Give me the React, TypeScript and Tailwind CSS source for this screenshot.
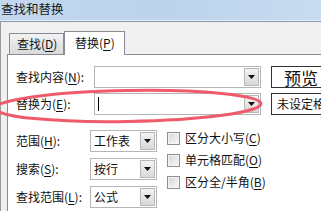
import type { ReactNode } from 'react';

function Arrow() {
  return (
    <svg width="7" height="4" viewBox="0 0 7 4">
      <path d="M0 0h7L3.5 4z" fill="#111" />
    </svg>
  );
}

function DropButton() {
  return (
    <div className="m-px flex w-[15px] shrink-0 items-center justify-center border border-[#b8b8b8] bg-linear-to-b from-[#f4f4f4] to-[#d8d8d8]">
      <Arrow />
    </div>
  );
}

function Key({ children }: { children: ReactNode }) {
  return <span className="underline underline-offset-2">{children}</span>;
}

function Combo({ width, children }: { width: string; children?: ReactNode }) {
  return (
    <div className={`flex h-[22px] shrink-0 border border-[#b5b5b5] bg-white ${width}`}>
      <div className="flex flex-1 items-center pl-[3px]">{children}</div>
      <DropButton />
    </div>
  );
}

function Check({ children }: { children: ReactNode }) {
  return (
    <div className="flex h-[22px] items-center gap-[5px] whitespace-nowrap">
      <div className="h-[13px] w-[13px] shrink-0 border border-[#8f8f8f] bg-linear-to-br from-[#d6d6d6] to-[#f9f9f9] shadow-[inset_0_0_0_1px_#f4f4f4]" />
      <span>{children}</span>
    </div>
  );
}

export default function App() {
  return (
    <div className="relative h-[211px] w-[321px] overflow-hidden bg-[#f0f0f0] font-['Noto_Sans_CJK_SC',sans-serif] text-[12px] leading-none text-[#111]">
      {/* title bar */}
      <div className="flex h-[21px] items-center border-b border-[#e2ebf5] bg-linear-to-r from-[#c2d8ef] via-[#bcd3eb] to-[#c7dcf1] pl-[1px] pb-[2px] text-[12.5px] text-[#1a1a1a]">
        查找和替换
      </div>
      <div className="h-px bg-[#8a9bb0]" />

      <div className="flex h-[189px] flex-col border-l border-[#9a9a9a] pl-[6px]">
        {/* tabs */}
        <div className="flex h-[32px] shrink-0 items-end pl-[2px]">
          <div className="flex h-[21px] w-[55px] items-center border border-b-0 border-[#898c95] bg-linear-to-b from-[#f3f3f3] to-[#dadada] pl-[7px]">
            查找(<Key>D</Key>)
          </div>
          <div className="relative z-10 -mb-px flex h-[24px] w-[61px] items-center border border-b-0 border-[#898c95] bg-white pb-[2px] pl-[10px]">
            替换(<Key>P</Key>)
          </div>
        </div>

        {/* panel */}
        <div className="flex-1 overflow-hidden border-t border-l border-[#898c95] bg-white pt-[11px] pl-[8px]">
          <div className="flex items-center">
            <div className="w-[78px] shrink-0">
              查找内容(<Key>N</Key>):
            </div>
            <Combo width="w-[167px]" />
            <div className="ml-[10px] flex h-[22px] w-[70px] shrink-0 items-center border border-[#333] pl-[12px] text-[17px]">
              预览
            </div>
          </div>
          <div className="mt-[5px] flex items-center">
            <div className="w-[78px] shrink-0">
              替换为(<Key>E</Key>):
            </div>
            <Combo width="w-[167px]">
              <div className="h-[14px] w-px bg-black" />
            </Combo>
            <div className="ml-[10px] flex h-[22px] w-[70px] shrink-0 items-center border border-[#333] pl-[5px] whitespace-nowrap">
              未设定格式
            </div>
          </div>

          <div className="mt-[15px] flex">
            <div className="flex shrink-0 flex-col gap-[6px]">
              <div className="flex items-center">
                <div className="w-[74px] shrink-0">
                  范围(<Key>H</Key>):
                </div>
                <Combo width="w-[67px]">工作表</Combo>
              </div>
              <div className="flex items-center">
                <div className="w-[74px] shrink-0">
                  搜索(<Key>S</Key>):
                </div>
                <Combo width="w-[67px]">按行</Combo>
              </div>
              <div className="flex items-center">
                <div className="w-[74px] shrink-0">
                  查找范围(<Key>L</Key>):
                </div>
                <Combo width="w-[67px]">公式</Combo>
              </div>
            </div>
            <div className="-mt-[3px] ml-[10px] flex shrink-0 flex-col">
              <Check>
                区分大小写(<Key>C</Key>)
              </Check>
              <Check>
                单元格匹配(<Key>O</Key>)
              </Check>
              <Check>
                区分全/半角(<Key>B</Key>)
              </Check>
            </div>
          </div>
        </div>
      </div>

      {/* red highlight */}
      <svg className="pointer-events-none absolute top-0 left-0" width="321" height="211">
        <ellipse cx="128" cy="106" rx="133" ry="15.5" fill="none" stroke="#ef5b6b" strokeWidth="3" transform="rotate(-1 128 106)" />
      </svg>
    </div>
  );
}
